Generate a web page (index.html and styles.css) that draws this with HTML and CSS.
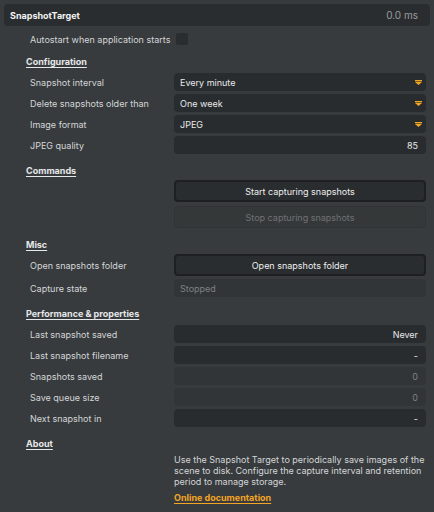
FILE: index.html
```html
<!DOCTYPE html>
<html lang="en">
<head>
  <meta charset="UTF-8">
  <title>SnapshotTarget</title>
  <link rel="stylesheet" href="styles.css">
</head>
<body>
  <div class="panel">
    <div class="panel-header">
      <span class="panel-title">SnapshotTarget</span>
      <span class="panel-time">0.0 ms</span>
    </div>

    <div class="autostart">
      <span>Autostart when application starts</span>
      <span class="checkbox"></span>
    </div>

    <h3 class="section">Configuration</h3>
    <div class="rows">
      <div class="row">
        <span class="label">Snapshot interval</span>
        <div class="field select">Every minute<svg class="caret" width="7" height="5" viewBox="0 0 7 5"><rect x="0" y="0" width="7" height="1.4" fill="#f5a524"/><path d="M0 2h7l-3.5 3z" fill="#f5a524"/></svg></div>
      </div>
      <div class="row">
        <span class="label">Delete snapshots older than</span>
        <div class="field select">One week<svg class="caret" width="7" height="5" viewBox="0 0 7 5"><rect x="0" y="0" width="7" height="1.4" fill="#f5a524"/><path d="M0 2h7l-3.5 3z" fill="#f5a524"/></svg></div>
      </div>
      <div class="row">
        <span class="label">Image format</span>
        <div class="field select">JPEG<svg class="caret" width="7" height="5" viewBox="0 0 7 5"><rect x="0" y="0" width="7" height="1.4" fill="#f5a524"/><path d="M0 2h7l-3.5 3z" fill="#f5a524"/></svg></div>
      </div>
      <div class="row">
        <span class="label">JPEG quality</span>
        <div class="field num">85</div>
      </div>
    </div>

    <h3 class="section">Commands</h3>
    <div class="buttons">
      <div class="row">
        <span></span>
        <button class="btn">Start capturing snapshots</button>
      </div>
      <div class="row">
        <span></span>
        <button class="btn btn-off">Stop capturing snapshots</button>
      </div>
    </div>

    <h3 class="section">Misc</h3>
    <div class="buttons">
      <div class="row">
        <span class="label">Open snapshots folder</span>
        <button class="btn">Open snapshots folder</button>
      </div>
      <div class="row tight">
        <span class="label">Capture state</span>
        <div class="field off">Stopped</div>
      </div>
    </div>

    <h3 class="section">Performance &amp; properties</h3>
    <div class="rows">
      <div class="row">
        <span class="label">Last snapshot saved</span>
        <div class="field num">Never</div>
      </div>
      <div class="row">
        <span class="label">Last snapshot filename</span>
        <div class="field num">-</div>
      </div>
      <div class="row">
        <span class="label">Snapshots saved</span>
        <div class="field num off">0</div>
      </div>
      <div class="row">
        <span class="label">Save queue size</span>
        <div class="field num off">0</div>
      </div>
      <div class="row">
        <span class="label">Next snapshot in</span>
        <div class="field num">-</div>
      </div>
    </div>

    <h3 class="section">About</h3>
    <div class="about">
      <p>Use the Snapshot Target to periodically save images of the scene to disk. Configure the capture interval and retention period to manage storage.</p>
      <div class="doc"><a href="#" class="doc-link">Online documentation</a></div>
    </div>
  </div>
</body>
</html>
```

FILE: styles.css
```css
body {
  margin: 0;
  background-color: #373b3e;
  font-family: Inter, "Noto Sans", sans-serif;
  font-size: 9px;
  color: #d4d6d7;
}

.panel {
  padding: 4px 4px 0;
}

.panel-header {
  display: flex;
  justify-content: space-between;
  align-items: center;
  height: 22px;
  padding: 0 12px 0 6px;
  background-color: #2a2d2f;
  border-radius: 4px;
}

.panel-title {
  font-weight: bold;
  color: #f2f2f2;
}

.panel-time {
  color: #9a9c9e;
  font-size: 10px;
}

.autostart {
  display: flex;
  align-items: center;
  gap: 6px;
  height: 12px;
  margin-top: 7px;
  padding-left: 26px;
}

.checkbox {
  width: 12px;
  height: 12px;
  border-radius: 2px;
  background-color: #2a2d2f;
}

.section {
  margin: 11px 0 0 22px;
  height: 12px;
  line-height: 12px;
  font-size: 9px;
  font-weight: bold;
  color: #e6e7e8;
  text-decoration: underline;
  text-underline-offset: 2px;
}

.rows {
  display: flex;
  flex-direction: column;
  gap: 3px;
  margin-top: 5px;
}

.buttons {
  display: flex;
  flex-direction: column;
  gap: 4px;
  margin-top: 3px;
}

.buttons .tight {
  margin-top: -1px;
}

.row {
  display: grid;
  grid-template-columns: 144px 252px;
  align-items: center;
  padding-left: 26px;
}

.field {
  display: flex;
  align-items: center;
  height: 18px;
  padding: 0 6px;
  background-color: #292c2e;
  border-radius: 4px;
  color: #e8e9ea;
}

.select {
  justify-content: space-between;
  padding-right: 4px;
}

.num {
  justify-content: flex-end;
  padding-right: 8px;
}

.field.off {
  background-color: #323538;
  color: #7d8083;
}

.btn {
  height: 22px;
  padding: 0;
  font-family: inherit;
  font-size: 9px;
  color: #eeeeee;
  background-color: #2a2d2f;
  border: 2px solid #1d1f21;
  border-radius: 4px;
}

.btn-off {
  color: #6f7275;
  background-color: #353839;
  border: 1px solid #303335;
}

.about {
  margin: 4px 0 0 170px;
  width: 252px;
}

.about p {
  margin: 0;
  line-height: 11px;
  color: #d4d6d7;
}

.doc {
  margin-top: 5px;
  line-height: 12px;
}

.doc-link {
  font-weight: bold;
  color: #f5a524;
  text-decoration: underline;
  text-decoration-thickness: 1px;
  text-underline-offset: 2px;
}
```
